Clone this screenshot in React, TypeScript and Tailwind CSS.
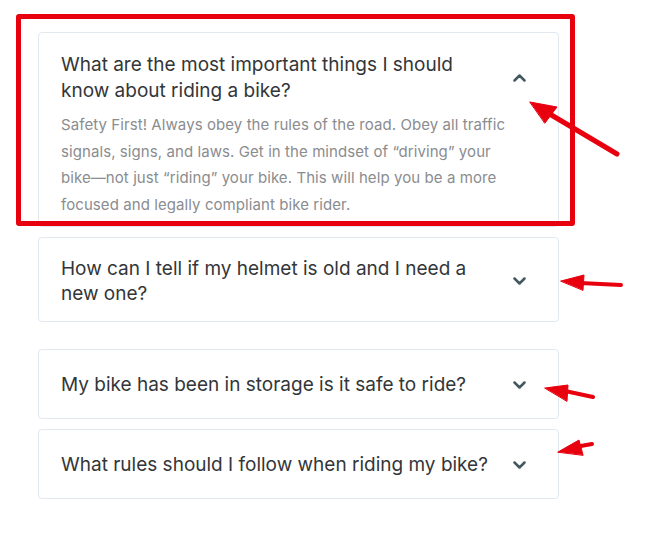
import React from "react";

const font = { fontFamily: "Inter, 'Noto Sans', sans-serif" };

function Chevron({ up }: { up?: boolean }) {
  return (
    <svg width="13" height="8" viewBox="0 0 13 8" className="shrink-0" fill="none">
      {up ? (
        <path d="M1.5 6.5 L6.5 1.5 L11.5 6.5" stroke="#435761" strokeWidth="2.5" strokeLinecap="round" strokeLinejoin="round" />
      ) : (
        <path d="M1.5 1.5 L6.5 6.5 L11.5 1.5" stroke="#435761" strokeWidth="2.5" strokeLinecap="round" strokeLinejoin="round" />
      )}
    </svg>
  );
}

export default function App() {
  return (
    <div className="relative w-[646px] h-[544px] bg-white overflow-hidden" style={font}>
      <div className="flex flex-col pl-[38px] pt-[32px] w-[559px] gap-[10px]">
        {/* Card 1 (open) */}
        <div className="border border-[#e1e8f0] rounded-[4px] pl-[22px] pr-[21px] pt-[18.5px] pb-[9px] h-[195px]">
          <div className="flex items-center">
            <div className="w-[434px] text-[19px] leading-[26.5px] text-[#333639]">
              What are the most important things I should know about riding a bike?
            </div>
            <div className="ml-[18px]">
              <Chevron up />
            </div>
          </div>
          <div className="mt-[7.5px] w-[455px] text-[15px] leading-[26.5px] tracking-[0.08px] text-[#8a8c8f]">
            Safety First! Always obey the rules of the road. Obey all traffic signals, signs, and laws. Get in the mindset of “driving” your bike—not just “riding” your bike. This will help you be a more focused and legally compliant bike rider.
          </div>
        </div>

        {/* Card 2 */}
        <div className="border border-[#e1e8f0] rounded-[4px] pl-[22px] pr-[21px] pt-[17.5px] pb-[15.5px]">
          <div className="flex items-center">
            <div className="w-[434px] text-[19px] leading-[25px] text-[#333639]">
              How can I tell if my helmet is old and I need a new one?
            </div>
            <div className="ml-[18px]">
              <Chevron />
            </div>
          </div>
        </div>

        {/* Card 3 */}
        <div className="mt-[17px] border border-[#e1e8f0] rounded-[4px] pl-[22px] pr-[21px] pt-[22px] pb-[21px]">
          <div className="flex items-center">
            <div className="w-[434px] text-[19px] leading-[25px] text-[#333639]">
              My bike has been in storage is it safe to ride?
            </div>
            <div className="ml-[18px]">
              <Chevron />
            </div>
          </div>
        </div>

        {/* Card 4 */}
        <div className="border border-[#e1e8f0] rounded-[4px] pl-[22px] pr-[21px] pt-[22px] pb-[21px]">
          <div className="flex items-center">
            <div className="w-[434px] text-[19px] leading-[25px] text-[#333639]">
              What rules should I follow when riding my bike?
            </div>
            <div className="ml-[18px]">
              <Chevron />
            </div>
          </div>
        </div>
      </div>

      {/* Annotation rectangle */}
      <div className="absolute left-[16px] top-[14px] w-[559px] h-[212px] border-[5px] border-[#e8000e] rounded-[3px] pointer-events-none" />

      {/* Annotation arrows */}
      <svg className="absolute left-0 top-0 pointer-events-none" width="646" height="544" viewBox="0 0 646 544">
        <g fill="#e8000e" stroke="#e8000e" strokeLinecap="round" strokeLinejoin="round">
          <line x1="617" y1="154" x2="548" y2="113" strokeWidth="5" />
          <polygon points="530,102 557,107 545,123" strokeWidth="1" />
          <line x1="621" y1="285" x2="580" y2="283" strokeWidth="4" />
          <polygon points="561,281 584,275 583,290" strokeWidth="1" />
          <line x1="593" y1="397" x2="565" y2="391" strokeWidth="4" />
          <polygon points="545,388 568,385 567,401" strokeWidth="1" />
          <line x1="592" y1="444" x2="575" y2="447" strokeWidth="4" />
          <polygon points="558,452 579,440 583,455" strokeWidth="1" />
        </g>
      </svg>
    </div>
  );
}
